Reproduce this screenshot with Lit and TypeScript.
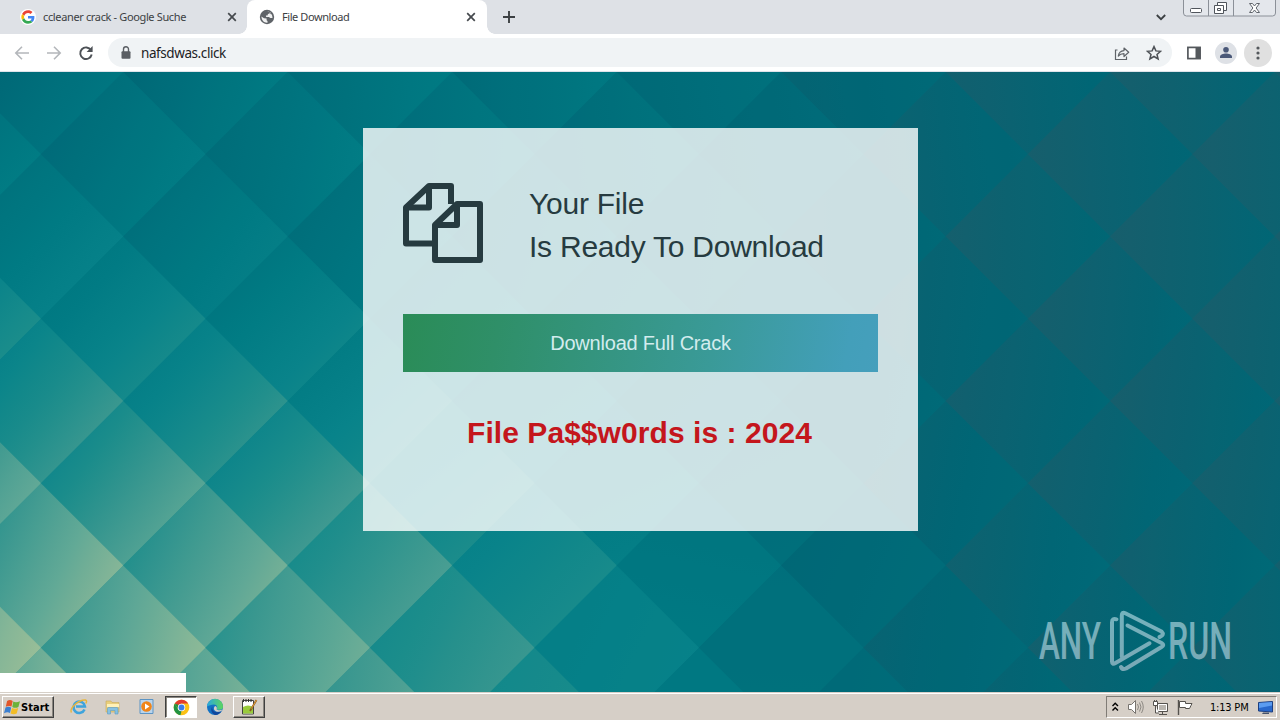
import { LitElement, html, svg, css } from "lit";
import { customElement } from "lit/decorators.js";

/* ---------- diamond wallpaper ---------- */

const RAMP = [
  [23, 94, 108], [0, 102, 117], [0, 112, 124], [0, 122, 131], [8, 131, 138],
  [28, 141, 139], [62, 153, 144], [95, 168, 150], [133, 182, 151], [163, 194, 152],
];

const XS = [0, 164, 328, 492, 656, 820, 984, 1280];
const YS = [0, 165, 329, 494, 628];
const LEVELS = [
  [2.3, 2.7, 3.2, 3.0, 2.8, 1.9, 1.2, 1.0],
  [4.0, 3.7, 3.5, 3.1, 2.6, 1.8, 1.1, 1.0],
  [6.1, 5.8, 5.4, 4.4, 3.1, 1.9, 1.2, 1.1],
  [8.2, 8.0, 7.4, 6.0, 4.4, 2.1, 1.4, 1.3],
  [9.1, 8.7, 8.0, 6.6, 4.4, 2.3, 1.5, 1.3],
];

function ramp(t: number): string {
  const c = Math.max(0, Math.min(RAMP.length - 1.001, t));
  const i = Math.floor(c);
  const f = c - i;
  return `rgb(${RAMP[i].map((v, k) => Math.round(v + (RAMP[i + 1][k] - v) * f)).join(",")})`;
}

function locate(list: number[], v: number): [number, number] {
  let i = 0;
  while (i < list.length - 2 && v > list[i + 1]) i++;
  return [i, Math.max(-0.5, Math.min(1.2, (v - list[i]) / (list[i + 1] - list[i])))];
}

function level(x: number, y: number): number {
  const [i, fx] = locate(XS, x);
  const [j, fy] = locate(YS, y);
  const a = LEVELS[j][i] + (LEVELS[j][i + 1] - LEVELS[j][i]) * fx;
  const b = LEVELS[j + 1][i] + (LEVELS[j + 1][i + 1] - LEVELS[j + 1][i]) * fx;
  return a + (b - a) * fy;
}

function diamonds() {
  const half = 82.25;
  const out = [];
  let id = 0;
  for (let row = -1; row < 9; row++) {
    for (let col = -1; col < 9; col++) {
      const cx = (row % 2 === 0 ? 40.9 : -41.35) + col * half * 2;
      const cy = 0.3 + row * half;
      const right = level(cx + half, cy);
      const l0 = level(cx - half, cy);
      const left = l0 - (0.85 + 0.25 * l0);
      /* slope of the level field inside this tile */
      const gx = (right - left) / (2 * half);
      const gy = (0.8 * (level(cx, cy + half) - level(cx, cy - half))) / (2 * half);
      const mid = (right + left) / 2;
      const len = Math.hypot(gx, gy) || 0.0001;
      const ux = gx / len;
      const uy = gy / len;
      const key = `d${id++}`;
      const stops = [0, 1, 2, 3, 4, 5, 6, 7, 8].map((n) => {
        const p = (n / 8) * 2 - 1;
        return svg`<stop offset=${n / 8} stop-color=${ramp(mid + p * half * len)} />`;
      });
      out.push(svg`
        <linearGradient id=${key} gradientUnits="userSpaceOnUse"
          x1=${cx - ux * half} y1=${cy - uy * half} x2=${cx + ux * half} y2=${cy + uy * half}>${stops}</linearGradient>
        <path fill="url(#${key})" d="M${cx - half - 0.4} ${cy}L${cx} ${cy - half - 0.4}L${cx + half + 0.4} ${cy}L${cx} ${cy + half + 0.4}Z" />`);
    }
  }
  return out;
}

/* ---------- browser chrome ---------- */

@customElement("tab-strip")
class TabStrip extends LitElement {
  static styles = css`
    :host { display: flex; height: 34px; background: #dee1e6; align-items: stretch; font: 11px "Noto Sans", sans-serif; color: #3c4043; }
    .tab { display: flex; align-items: center; box-sizing: border-box; position: relative; }
    .idle { width: 247px; padding: 0 8px 0 20px; }
    .active { width: 240px; padding: 0 9px 0 12px; background: #fff; border-radius: 8px 8px 0 0; }
    .active::before, .active::after { content: ""; position: absolute; bottom: 0; width: 8px; height: 8px; }
    .active::before { left: -8px; background: radial-gradient(circle at 0 0, #dee1e6 7.5px, #fff 8px); }
    .active::after { right: -8px; background: radial-gradient(circle at 100% 0, #dee1e6 7.5px, #fff 8px); }
    .label { flex: 1; white-space: nowrap; margin-left: 7px; line-height: 16px; }
    .l1 { letter-spacing: -0.36px; }
    .l2 { letter-spacing: -0.42px; }
    svg { display: block; flex: none; }
    .plus { align-self: center; margin-left: 15px; }
    .grow { flex: 1; }
    .chev { align-self: center; margin-right: 15px; }
    .win { width: 93px; height: 17px; margin-right: 4px; }
  `;
  cross() {
    return html`<svg width="14" height="14"><path d="M3.2 3.2l7.6 7.6M10.8 3.2l-7.6 7.6" stroke="#45494d" stroke-width="1.7" /></svg>`;
  }
  render() {
    return html`
      <div class="tab idle">
        <svg width="16" height="16" viewBox="0 0 48 48">
          <circle cx="24" cy="24" r="24" fill="#fff" />
          <g transform="translate(4 4) scale(.835)">
            <path fill="#EA4335" d="M24 9.5c3.54 0 6.71 1.22 9.21 3.6l6.85-6.85C35.9 2.38 30.47 0 24 0 14.62 0 6.51 5.38 2.56 13.22l7.98 6.19C12.43 13.72 17.74 9.5 24 9.5z" />
            <path fill="#4285F4" d="M46.98 24.55c0-1.57-.15-3.09-.38-4.55H24v9.02h12.94c-.58 2.96-2.26 5.48-4.78 7.18l7.73 6c4.51-4.18 7.09-10.36 7.09-17.65z" />
            <path fill="#FBBC05" d="M10.53 28.59c-.48-1.45-.76-2.99-.76-4.59s.27-3.14.76-4.59l-7.98-6.19C.92 16.46 0 20.12 0 24c0 3.88.92 7.54 2.56 10.78l7.97-6.19z" />
            <path fill="#34A853" d="M24 48c6.48 0 11.93-2.13 15.89-5.81l-7.73-6c-2.15 1.45-4.92 2.3-8.16 2.3-6.26 0-11.57-4.22-13.47-9.91l-7.98 6.19C6.51 42.62 14.62 48 24 48z" />
          </g>
        </svg>
        <span class="label l1">ccleaner crack - Google Suche</span>${this.cross()}
      </div>
      <div class="tab active">
        <svg width="16" height="16" viewBox="0 0 16 16">
          <circle cx="8" cy="8" r="7.200" fill="#5f6368" />
          <path d="M2.400 7.600L5 9.200l2.600.3v1.700l.9.800v1.700C5 14 2.600 11.500 2.400 7.600zM8.200 2.300l2.700.6-.3 1.500-1.700.5-.3 1.500-1.700.2.300 1.300h2.700l1.400 1.200h2.200c0-1.700-.3-2.700-1-3.800l-1.200-.2.200-1.500C10.500 2.700 9.500 2.300 8.200 2.300z" fill="#fff" opacity=".9" />
        </svg>
        <span class="label l2">File Download</span>${this.cross()}
      </div>
      <svg class="plus" width="14" height="14"><path d="M7 1v12M1 7h12" stroke="#3c4043" stroke-width="1.9" /></svg>
      <span class="grow"></span>
      <svg class="chev" width="14" height="14"><path d="M2.8 5l4.2 4.2L11.2 5" fill="none" stroke="#3c4043" stroke-width="1.8" /></svg>
      <svg class="win" width="93" height="17">
        <path d="M.5 0v13a3 3 0 0 0 3 3h86a3 3 0 0 0 3-3V0M25.500 0v16M50.500 0v16" fill="#e4e7ec" stroke="#8b9098" />
        <rect x="7.500" y="8.500" width="11" height="4" rx="1" fill="#fff" stroke="#50555c" />
        <path d="M34.500 2.500h9v8h-9z" fill="#fff" stroke="#50555c" />
        <path d="M31.500 5.500h9v8h-9z" fill="#fff" stroke="#50555c" />
        <path d="M34.500 8.500h3v2h-3z" fill="none" stroke="#50555c" />
        <path d="M66.500 3.500h3l2 2.500 2-2.500h3l-3.400 4.500 3.400 4.500h-3l-2-2.500-2 2.500h-3l3.400-4.500z" fill="#fff" stroke="#60656c" />
      </svg>
    `;
  }
}

@customElement("nav-bar")
class NavBar extends LitElement {
  static styles = css`
    :host { display: flex; height: 38px; background: #fff; align-items: center; padding: 0 6px; box-sizing: border-box; border-bottom: 1px solid #dfe3ea; font: 13.500px "Noto Sans", sans-serif; color: #202124; }
    .cell { width: 32px; height: 32px; display: grid; place-items: center; flex: none; }
    .box { flex: 1; height: 29px; margin: 0 6px 0 6px; padding: 0 2px 0 10px; background: #f0f3f5; border-radius: 15px; display: flex; align-items: center; }
    .url { flex: 1; margin-left: 7px; letter-spacing: -0.42px; line-height: 18px; }
    .disc { width: 22px; height: 22px; border-radius: 50%; background: #dee1e6; display: grid; place-items: center; }
    .menu { width: 28px; height: 28px; background: #e0e0e0; }
    svg { display: block; }
  `;
  render() {
    return html`
      <span class="cell"><svg width="16" height="16"><path d="M15 8H2M8 1.800L1.800 8 8 14.200" fill="none" stroke="#b4b7bb" stroke-width="1.600" /></svg></span>
      <span class="cell"><svg width="16" height="16"><path d="M1 8h13M8 1.800L14.200 8 8 14.200" fill="none" stroke="#b4b7bb" stroke-width="1.600" /></svg></span>
      <span class="cell"><svg width="16" height="16"><path d="M13 5.200A5.800 5.800 0 1 0 13.700 9.500" fill="none" stroke="#4d5156" stroke-width="1.900" /><path d="M14.600 1v6H8.600z" fill="#4d5156" /></svg></span>
      <div class="box">
        <svg width="16" height="16"><rect x="3.500" y="6.200" width="9" height="7.600" rx="1" fill="#5a5e63" /><path d="M5.500 7V4.300a2.500 2.500 0 0 1 5 0V7" fill="none" stroke="#5a5e63" stroke-width="1.400" /></svg>
        <span class="url">nafsdwas.click</span>
        <span class="cell"><svg width="16" height="16"><path d="M3.500 5H1.500v9.500h11V11.500" fill="none" stroke="#5f6368" stroke-width="1.200" /><path d="M4.300 11c.5-3.600 2.500-5.200 5.700-5.400V3l4.700 4.300-4.700 4.200V8.700c-2.600 0-4.300.6-5.700 2.300z" fill="none" stroke="#5f6368" stroke-width="1.200" stroke-linejoin="round" /></svg></span>
        <span class="cell"><svg width="16" height="16"><path d="M8 1.600l1.900 4.300 4.700.4-3.600 3.100 1.100 4.600L8 11.500 3.900 14 5 9.400 1.400 6.300l4.700-.4z" fill="none" stroke="#4d5156" stroke-width="1.500" /></svg></span>
      </div>
      <span class="cell"><svg width="16" height="16"><rect x="1.900" y="2.400" width="12.200" height="11.200" fill="#fff" stroke="#54585c" stroke-width="1.700" /><rect x="9.500" y="2" width="4.800" height="12" fill="#54585c" /></svg></span>
      <span class="cell"><span class="disc"><svg width="16" height="16"><circle cx="8" cy="4.800" r="2.800" fill="#4a5878" /><path d="M2 13v-1.200C2 9.600 5.500 8.600 8 8.600s6 1 6 3.200V13z" fill="#4a5878" /></svg></span></span>
      <span class="cell"><span class="disc menu"><svg width="16" height="16" fill="#54585c"><circle cx="8" cy="3" r="1.600" /><circle cx="8" cy="8" r="1.600" /><circle cx="8" cy="13" r="1.600" /></svg></span></span>
    `;
  }
}

/* ---------- page ---------- */

@customElement("file-page")
class FilePage extends LitElement {
  static styles = css`
    :host { display: grid; position: relative; height: 620px; overflow: hidden; background: #006675; font-family: "Liberation Sans", Arial, sans-serif; }
    .wall, .front { grid-area: 1 / 1; }
    .wall { display: block; }
    .front { display: flex; justify-content: center; align-items: flex-start; padding: 56px 0 0 1px; z-index: 1; }
    .card { width: 555px; height: 403px; box-sizing: border-box; padding: 48px 40px 0; background: rgba(255, 255, 255, 0.8); }
    .head { display: flex; align-items: center; }
    .head svg { display: block; }
    h1 { margin: 3px 0 0 46px; font-size: 30px; line-height: 43px; font-weight: 400; color: #263b40; letter-spacing: -0.24px; white-space: nowrap; }
    .btn { display: grid; place-items: center; width: 475px; height: 58px; margin-top: 44px; padding: 0; border: 0; color: #d3ecee; font: 20px/24px "Liberation Sans", Arial, sans-serif; letter-spacing: -0.2px; background: linear-gradient(100deg, #2a8c57 0%, #2f8f68 20%, #3a9a98 65%, #439fba 93%, #459fbc 100%); }
    .pass { margin: 42px 2px 0 0; text-align: center; font-size: 30px; line-height: 38px; font-weight: 700; color: #c4161c; letter-spacing: 0.06px; }
    .mark { position: absolute; left: 1036px; top: 535px; z-index: 2; }
    .status { position: absolute; left: 0; bottom: 0; width: 186px; height: 19px; background: #fff; z-index: 2; }
  `;
  render() {
    return html`
      <svg class="wall" width="1280" height="620" viewBox="0 0 1280 620">${diamonds()}</svg>
      <div class="front">
        <div class="card">
          <div class="head">
            <svg width="80" height="94" viewBox="0 0 80 94" fill="none" stroke="#263b40" stroke-width="6" stroke-linejoin="round">
              <path d="M29 67.500H3V31.500L26 10H48V28" />
              <path d="M3 31.500H26V10" />
              <path d="M32 49L54 28H77V84H32Z" />
              <path d="M32 49H54V28" />
            </svg>
            <h1>Your File<br />Is Ready To Download</h1>
          </div>
          <button class="btn">Download Full Crack</button>
          <p class="pass">File Pa$$w0rds is : 2024</p>
        </div>
      </div>
      <svg class="mark" width="243" height="70" font-family="Roboto, sans-serif" font-size="51" font-weight="500">
        <defs>
          <linearGradient id="wm" x1="0" y1="0" x2="0" y2="70" gradientUnits="userSpaceOnUse">
            <stop offset="0" stop-color="#74b3bd" /><stop offset="1" stop-color="#7ba7b5" />
          </linearGradient>
        </defs>
        <g fill="url(#wm)">
          <text x="3" y="52" textLength="62" lengthAdjust="spacingAndGlyphs">ANY</text>
          <text x="132" y="52" textLength="64" lengthAdjust="spacingAndGlyphs">RUN</text>
        </g>
        <g fill="none" stroke="url(#wm)" stroke-width="4" stroke-linejoin="round" stroke-linecap="round">
          <path d="M80.500 12.300Q76 11 76 15.500V54.500q0 3.500 3.500 1.500L113.500 36.300" />
          <path d="M85.800 49.500V8.500q0-4 3.500-2.300L125.500 24.500q3.500 3.500-2 5.500" />
          <path d="M91.500 18.500L125.500 36q3.500 2 0 4L90 61.500q-3.500 1.500-5-1.500" />
        </g>
      </svg>
      <div class="status"></div>
    `;
  }
}

/* ---------- taskbar ---------- */

@customElement("task-bar")
class TaskBar extends LitElement {
  static styles = css`
    :host { display: flex; height: 28px; box-sizing: border-box; border-top: 1px solid #d6d0c8; background: linear-gradient(#fff 1px, #d6cfc7 1px); padding: 3px 3px 2px 2px; align-items: stretch; font: 11px "DejaVu Sans Condensed", "DejaVu Sans", sans-serif; color: #000; }
    .start { box-sizing: border-box; width: 52px; display: flex; align-items: center; padding-left: 1px; font-weight: 700; font-size: 11px; letter-spacing: 0.05px; margin-right: 8px; }
    .raised { border: 1px solid; border-color: #fff #404040 #404040 #fff; box-shadow: inset -1px -1px #8a867f; box-sizing: border-box; }
    .cell { width: 34px; display: grid; place-items: center; }
    .slot { width: 32px; height: 22px; display: grid; place-items: center; box-sizing: border-box; }
    .down { background: #fff; border: 1px solid; border-color: #404040 #fff #fff #404040; box-shadow: inset 1px 1px #8a867f; }
    .grow { flex: 1; }
    .tray { width: 171px; box-sizing: border-box; border: 1px solid; border-color: #807c76 #fff #fff #807c76; display: flex; align-items: center; padding-left: 4px; }
    .time { width: 40px; margin: 0 8px 0 16px; white-space: nowrap; letter-spacing: -0.2px; }
    .g { margin-left: 7px; }
    .f { margin-left: 8px; }
    svg { display: block; flex: none; }
  `;
  render() {
    return html`
      <div class="start raised">
        <svg width="17" height="16" viewBox="0 0 16 16">
          <path d="M2.600 2q2.800-1.800 5.600 0L7 7.600q-2.500-1.500-5.700.2z" fill="#e2562a" />
          <path d="M8.800 2.600q2.800 1.500 6.700-.4L13.900 8q-3 1.700-6.100 0z" fill="#6bb23a" />
          <path d="M1 8.500q2.800-1.700 5.700 0L5.500 14q-2.500-1.600-6 .2z" fill="#3b7fd0" />
          <path d="M7.500 8.900q3 1.500 6.200 0L12.200 14.500q-3 1.600-6.200 0z" fill="#f2bd27" />
        </svg>Start
      </div>
      <div class="cell"><svg width="18" height="18" viewBox="0 0 18 18">
        <path d="M14.500 11.500a5.700 5.700 0 1 1 .4-3H6" fill="none" stroke="#3fa4dc" stroke-width="2.600" />
        <path d="M1.500 14.500C-1 11 8 1.500 15.500 2q2 .6.300 3.500" fill="none" stroke="#e8b53a" stroke-width="1.400" />
      </svg></div>
      <div class="cell"><svg width="18" height="18" viewBox="0 0 18 18">
        <path d="M2 3h5l1 1.500h7V14H2z" fill="#e9cf7c" stroke="#c8a95a" stroke-width=".6" />
        <path d="M3 6h12v3H3z" fill="#fff1b8" />
        <path d="M3.500 16v-5.500q0-1 1-1h8.500q1 0 1 1V16h-3v-3.500H6.500V16z" fill="#86c1e2" stroke="#5d9cc4" stroke-width=".6" />
      </svg></div>
      <div class="cell"><svg width="18" height="18" viewBox="0 0 18 18">
        <path d="M2 1.500h13v14H2z" fill="#b9d4ec" stroke="#5c94c4" />
        <circle cx="8.500" cy="8.500" r="5.300" fill="#f08519" />
        <path d="M7 5.500l4.500 3-4.500 3z" fill="#fff" />
      </svg></div>
      <div class="cell"><span class="slot down"><svg width="17" height="17" viewBox="0 0 48 48">
        <circle cx="24" cy="24" r="22" fill="#fbc116" />
        <path d="M5 13l9.500 16.500L24 34l-3 11.800A22 22 0 0 1 5 13z" fill="#229342" />
        <path d="M4.950 13A22 22 0 0 1 43 13H24L14 18z" fill="#e33b2e" />
        <path d="M5 13L14.500 29.500 20 18z" fill="#229342" />
        <circle cx="24" cy="24" r="10.500" fill="#fff" /><circle cx="24" cy="24" r="8.300" fill="#3b7ce8" />
      </svg></span></div>
      <div class="cell"><svg width="18" height="18" viewBox="0 0 18 18">
        <defs><linearGradient id="e"><stop offset="0" stop-color="#2aa7df" /><stop offset="1" stop-color="#5dd65c" /></linearGradient></defs>
        <circle cx="9" cy="9" r="8" fill="#1272c4" />
        <path d="M1 8.500A8 8 0 0 1 17 9c0 3-4.500 3.500-6.500 2.200 1.600-1.500.4-4.700-2.500-4.700-3 0-5 1-7 2z" fill="url(#e)" />
        <path d="M6.500 8.500c-1 3 1.500 6 5.500 5.600 1.500-.2 2.600-.7 3.400-1.200-1.300 2.500-3.500 3.800-6 4-3.800-.8-5.500-5.900-2.900-8.400z" fill="#12479c" />
        <path d="M10.500 11.200c1.500 1.500 4.500 1 6 .2l-1.200 1.700c-2 1.200-5.500.8-7-1.200-.8-1.500-.2-3.400.8-4 1.700.6 2.400 2.100 1.400 3.300z" fill="#d6cfc7" />
      </svg></div>
      <div class="cell"><span class="slot raised"><svg width="18" height="18" viewBox="0 0 18 18">
        <path d="M2.500 2.500h11v13.500h-11z" fill="#fff" stroke="#444" />
        <path d="M3 9q5-3 10 0v6.500H3z" fill="#9acb3c" />
        <path d="M3.500 1v3M6 1v3M8.500 1v3M11 1v3" stroke="#333" />
        <path d="M16.500 2L10 13" stroke="#8a5a22" stroke-width="1.800" />
        <path d="M16.500 2l-5 8.500" stroke="#e8a33a" stroke-width=".9" />
      </svg></span></div>
      <span class="grow"></span>
      <div class="tray">
        <svg width="9" height="12"><path d="M1.500 5l2.700-2.700L7 5M1.500 9.500l2.700-2.700L7 9.500" fill="none" stroke="#000" stroke-width="1.400" /></svg>
        <svg class="g" width="18" height="16"><path d="M1.500 5.500h3l4-4v13l-4-4h-3z" fill="#fff" stroke="#77736e" /><path d="M10.500 5q2 3 0 6M12.500 3.500q3 4.500 0 9M14.500 2q3.500 6 0 12" fill="none" stroke="#8d8983" /></svg>
        <svg class="g" width="17" height="17"><path d="M5.500 4.500h10v8h-10z" fill="#b9b5af" stroke="#55524e" /><path d="M6.500 5.500h8v6h-8z" fill="none" stroke="#fff" /><path d="M7 15.500h8M10.500 12.500v3" stroke="#55524e" /><path d="M1.500 2.500h4v4h-4zM3.500 6.500v7.500H7M2.500 1v1.500M4.500 1v1.500" fill="#fff" stroke="#55524e" /></svg>
        <svg class="f" width="17" height="17"><path d="M1.500 1v15" stroke="#55524e" stroke-width="1.400" /><path d="M2.500 2.500h6v2h6.500q-1 2-2.500 5h-4v-1h-6z" fill="#fff" stroke="#55524e" /></svg>
        <span class="time">1:13 PM</span>
        <svg width="16" height="15"><path d="M.5 2.500l14-1v10.500l-14-1z" fill="#2868cc" stroke="#1c3f80" /><path d="M1 3l13-1v3.500L1 8z" fill="#5b9cf0" /><path d="M5 12.500h6v1.500H4z" fill="#45536b" /></svg>
      </div>
    `;
  }
}

@customElement("app-root")
class AppRoot extends LitElement {
  static styles = css`
    :host { display: flex; flex-direction: column; width: 1280px; height: 720px; overflow: hidden; background: #fff; }
  `;
  render() {
    return html`<tab-strip></tab-strip><nav-bar></nav-bar><file-page></file-page><task-bar></task-bar>`;
  }
}
